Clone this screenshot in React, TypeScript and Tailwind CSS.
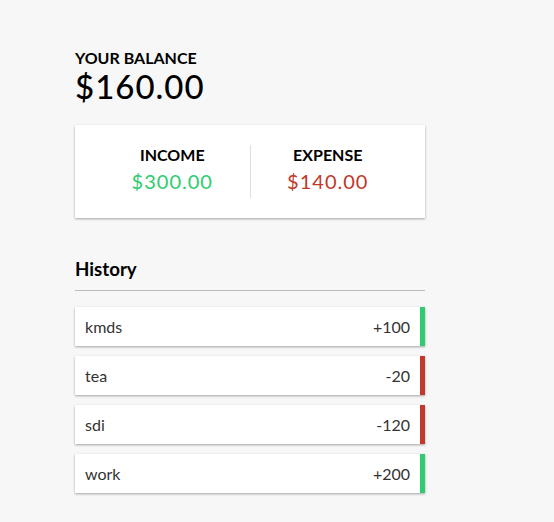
import React from "react";

const shadow = "shadow-[0_1px_3px_rgba(0,0,0,0.12),0_1px_2px_rgba(0,0,0,0.24)]";

export default function App() {
  const transactions = [
    { id: 1, text: "kmds", amount: 100 },
    { id: 2, text: "tea", amount: -20 },
    { id: 3, text: "sdi", amount: -120 },
    { id: 4, text: "work", amount: 200 },
  ];

  return (
    <div className="min-h-screen bg-[#f7f7f7] font-['Lato',sans-serif] text-black">
      <div className="w-[350px] ml-[75px] pt-[48px] flex flex-col">
        <h4 className="text-[16px] leading-[19px] font-bold uppercase">Your Balance</h4>
        <h1 className="text-[33px] leading-[38px] font-medium tracking-[1px]">$160.00</h1>

        {/* Income / expense */}
        <div className={`mt-[20px] bg-white p-[20px] flex ${shadow}`}>
          <div className="flex-1 text-center border-r border-[#dedede]">
            <h4 className="text-[16px] leading-[19px] font-bold uppercase">Income</h4>
            <p className="text-[20px] leading-[24px] tracking-[1px] my-[5px] text-[#2ecc71]">$300.00</p>
          </div>
          <div className="flex-1 text-center">
            <h4 className="text-[16px] leading-[19px] font-bold uppercase">Expense</h4>
            <p className="text-[20px] leading-[24px] tracking-[1px] my-[5px] text-[#c0392b]">$140.00</p>
          </div>
        </div>

        <h3 className="mt-[40px] text-[18.72px] leading-[22px] font-bold pb-[10px] border-b border-[#bbb]">
          History
        </h3>
        <ul className="mt-[16px] flex flex-col gap-[10px]">
          {transactions.map((t) => (
            <li
              key={t.id}
              className={`bg-white text-[#333] text-[16px] leading-[19px] flex justify-between p-[10px] border-r-[5px] ${shadow} ${
                t.amount < 0 ? "border-[#c0392b]" : "border-[#2ecc71]"
              }`}
            >
              <span>{t.text}</span>
              <span>
                {t.amount < 0 ? "-" : "+"}
                {Math.abs(t.amount)}
              </span>
            </li>
          ))}
        </ul>
      </div>
    </div>
  );
}
